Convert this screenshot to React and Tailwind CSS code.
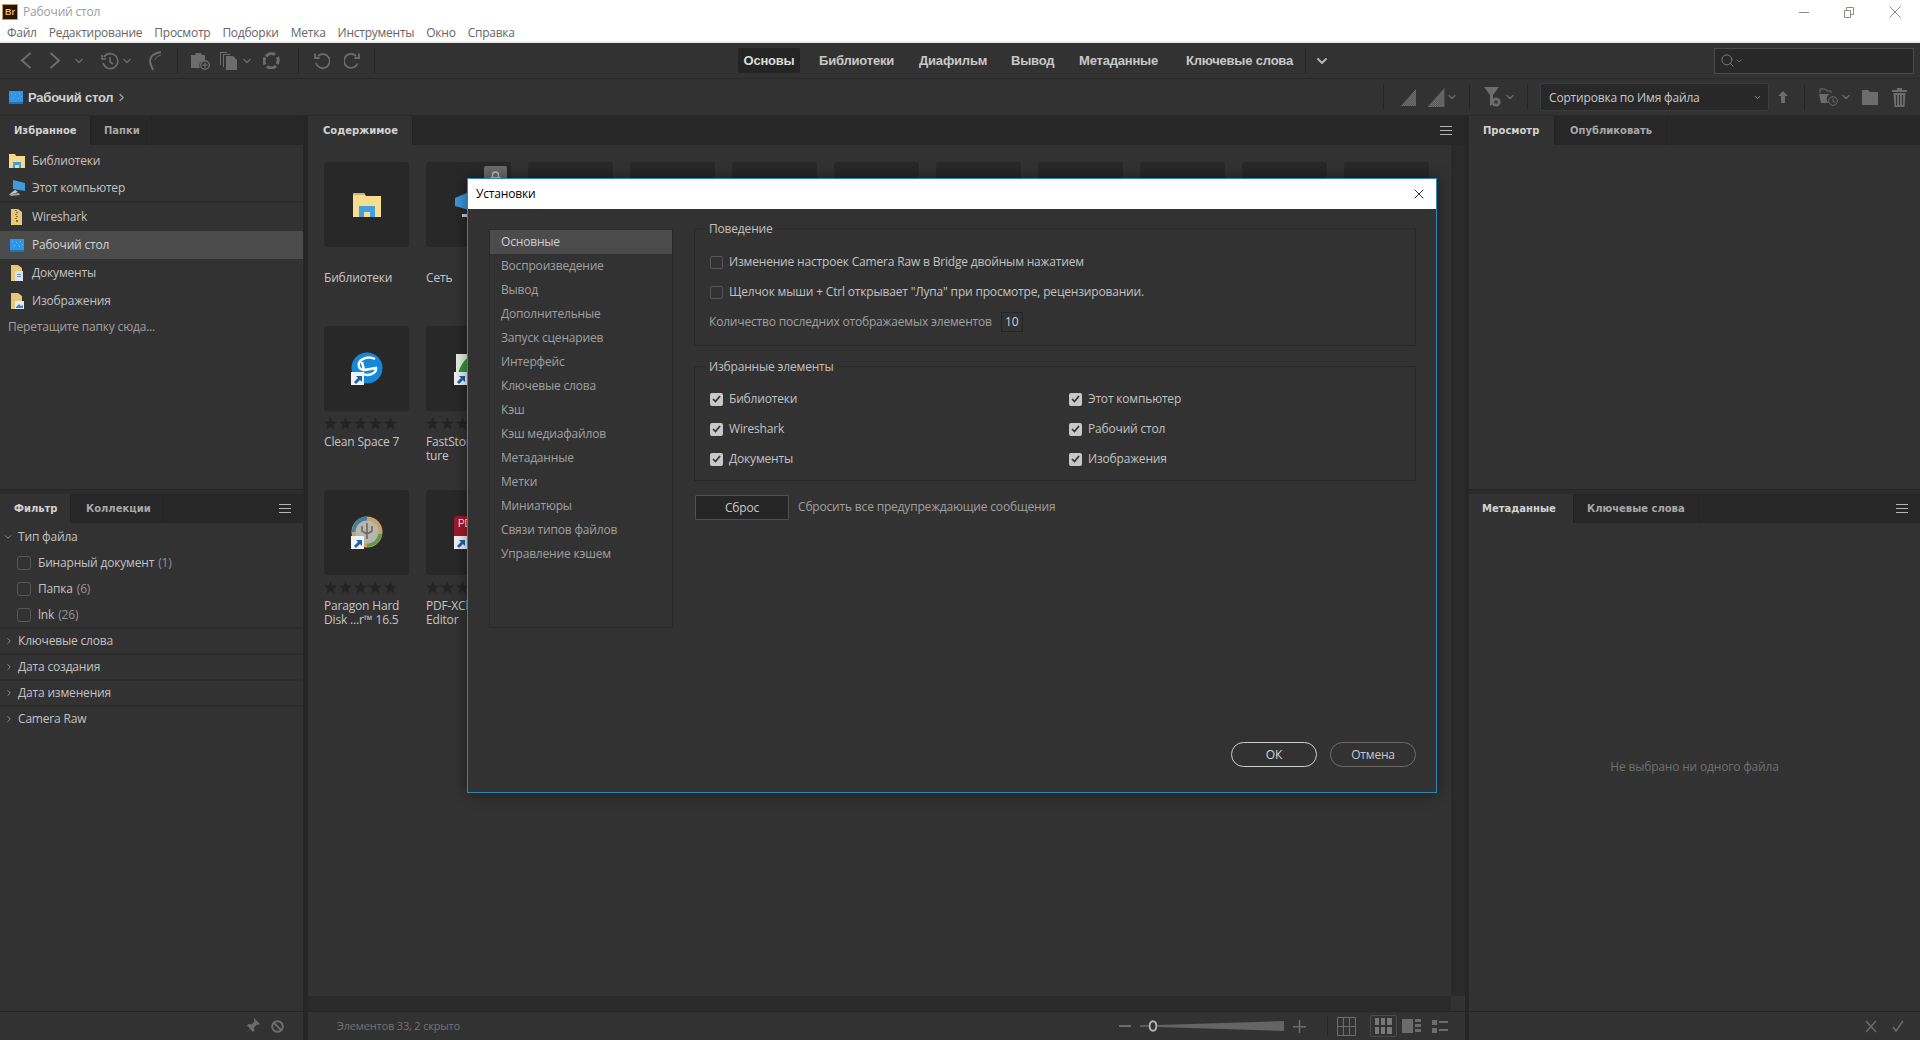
import { ChevronDown, ChevronRight, Search, X } from 'lucide-react';

const favorites = [
  { name: 'Библиотеки', icon: 'lib' },
  { name: 'Этот компьютер', icon: 'pc', line: true },
  { name: 'Wireshark', icon: 'zip' },
  { name: 'Рабочий стол', icon: 'desk', active: true },
  { name: 'Документы', icon: 'docs' },
  { name: 'Изображения', icon: 'pics' },
];

const prefTabs = [
  'Основные',
  'Воспроизведение',
  'Вывод',
  'Дополнительные',
  'Запуск сценариев',
  'Интерфейс',
  'Ключевые слова',
  'Кэш',
  'Кэш медиафайлов',
  'Метаданные',
  'Метки',
  'Миниатюры',
  'Связи типов файлов',
  'Управление кэшем',
];

// Small icons of the favorites list
function SideIcon({ type }) {
  if (type === 'lib')
    return (
      <svg width="16" height="16" viewBox="0 0 16 16">
        <path d="M0 1h6l1 2h9v12H0z" fill="#f6d98a" />
        <path d="M4 15V9h8v6h-2v-3H6v3z" fill="#3c9fe2" />
      </svg>
    );
  if (type === 'pc')
    return (
      <svg width="18" height="18" viewBox="0 0 18 18">
        <path d="M5 1l12 3v8l-12-2z" fill="#3f9be0" />
        <path d="M7 11l3 2-9 3 2-2z" fill="#c9ced2" />
        <path d="M1 15l10-1 1 2-9 1z" fill="#9aa3a8" />
      </svg>
    );
  if (type === 'desk')
    return (
      <svg width="14" height="13" viewBox="0 0 14 13">
        <rect width="14" height="13" fill="#2f97e4" />
        <rect y="11" width="14" height="2" fill="#1c74b8" />
        <path d="M2 2h1v1H2zM6 3h1v1H6zM10 2h1v1h-1zM4 6h1v1H4zM9 7h1v1H9zM12 5h1v1h-1z" fill="#68b9f0" />
      </svg>
    );
  return (
    <svg width="14" height="18" viewBox="0 0 14 18">
      <path d="M1 1h7l4 3v13H1z" fill="#e8c878" />
      {type === 'zip' && <path d="M5 2h2v1H5zM6 4h2v1H6zM5 6h2v1H5zM6 8h2v1H6zM5 10h2v1H5zM6 12h2v2H6z" fill="#8a6a2c" />}
      {type === 'docs' && <path d="M5 7h8v10H5z" fill="#d8e4f0" />}
      {type === 'docs' && <path d="M7 10h4v1H7zM7 12h4v1H7z" fill="#6f8ca8" />}
      {type === 'pics' && <path d="M5 9h9v8H5z" fill="#e6edf3" />}
      {type === 'pics' && <path d="M6 15l3-3 2 2 2-1v3H6z" fill="#3f88c5" />}
    </svg>
  );
}

function Hamburger() {
  return (
    <svg width="12" height="9" viewBox="0 0 12 9" fill="#b4b4b4">
      <rect width="12" height="1" />
      <rect y="4" width="12" height="1" />
      <rect y="8" width="12" height="1" />
    </svg>
  );
}

function Shortcut() {
  return (
    <g>
      <rect x="0" y="20" width="13" height="13" fill="#f2f2f2" />
      <path d="M3 30l4-4-2-2h6v6l-2-2-4 4z" fill="#1d5fb0" />
    </g>
  );
}

function Thumb({ children, lock }) {
  return (
    <div className="relative flex h-[85px] w-[85px] shrink-0 items-center justify-center rounded-[3px] bg-[#282828]">
      {lock && (
        <div className="absolute right-[4px] top-[4px] flex h-[23px] w-[23px] items-center justify-center rounded-[2px] bg-[#6b6b6b]">
          <svg width="11" height="13" viewBox="0 0 11 13">
            <path d="M2.5 6V4a3 3 0 016 0v2" fill="none" stroke="#c4c4c4" strokeWidth="1.4" />
            <rect y="6" width="11" height="7" rx="1" fill="#c4c4c4" />
          </svg>
        </div>
      )}
      {children}
    </div>
  );
}

function Stars() {
  return (
    <div className="flex h-[24px] items-center gap-[2px]">
      {[0, 1, 2, 3, 4].map((i) => (
        <svg key={i} width="13" height="13" viewBox="0 0 13 13" fill="#232323">
          <polygon points="6.5,0 8.1,4.6 13,4.8 9.1,7.8 10.5,12.6 6.5,9.8 2.5,12.6 3.9,7.8 0,4.8 4.9,4.6" />
        </svg>
      ))}
    </div>
  );
}

function GridItem({ icon, label, stars, lock }) {
  return (
    <div className="flex h-[164px] w-[85px] shrink-0 flex-col">
      <Thumb lock={lock}>{icon}</Thumb>
      {stars ? <Stars /> : <div className="h-[24px]" />}
      <div className="whitespace-nowrap text-[12px] leading-[14px] text-[#c6c6c6]">{label}</div>
    </div>
  );
}

function TabLabel({ children, active, className }) {
  return (
    <div
      className={`flex h-[29px] items-center whitespace-nowrap border-r border-[#232323] font-['DejaVu_Sans',sans-serif] text-[10px] font-bold tracking-normal ${
        active ? 'bg-[#323232] text-[#d2d2d2]' : 'text-[#a8a8a8]'
      } ${className}`}
    >
      {children}
    </div>
  );
}

function Check({ checked }) {
  if (!checked) return <div className="h-[13px] w-[13px] rounded-[2px] border border-[#585858]" />;
  return (
    <div className="flex h-[13px] w-[13px] items-center justify-center rounded-[2px] bg-[#c8c8c8]">
      <svg width="9" height="8" viewBox="0 0 9 8">
        <path d="M1 4l2.5 2.5L8 1" fill="none" stroke="#333" strokeWidth="1.7" />
      </svg>
    </div>
  );
}

function FilterCheck({ label, count }) {
  return (
    <div className="flex h-[26px] items-center pl-[17px]">
      <div className="h-[14px] w-[14px] rounded-[3px] border border-[#585858]" />
      <span className="ml-[7px] text-[#c2c2c2]">{label}</span>
      <span className="ml-[4px] text-[#949494]">{count}</span>
    </div>
  );
}

function FilterRow({ label }) {
  return (
    <div className="flex h-[26px] items-center border-b-2 border-[#2b2b2b] text-[#c2c2c2]">
      <ChevronRight size={10} className="ml-[4px] text-[#a0a0a0]" />
      <span className="ml-[4px]">{label}</span>
    </div>
  );
}

function Sep({ className }) {
  return <div className={`h-[26px] w-px bg-[#262626] ${className}`} />;
}

function Stairs({ w, h, id }) {
  return (
    <svg width={w} height={h} viewBox="0 0 16 18">
      <defs>
        <pattern id={id} width="2" height="2" patternUnits="userSpaceOnUse">
          <rect width="2" height="2" fill="#4a4a4a" />
          <rect width="1" height="1" fill="#7c7c7c" />
          <rect x="1" y="1" width="1" height="1" fill="#7c7c7c" />
        </pattern>
      </defs>
      <path d="M0 18L16 0v18z" fill={`url(#${id})`} />
    </svg>
  );
}

function TitleBar() {
  return (
    <div className="h-[43px] shrink-0 border-b-2 border-[#ececec] bg-white">
      <div className="flex h-[24px] items-center">
        <div className="ml-[3px] flex h-[14px] w-[14px] items-center justify-center bg-[#2a1503] ring-1 ring-[#c79a5a]">
          <span className="font-['Liberation_Sans',sans-serif] text-[9px] font-bold leading-none tracking-normal text-[#e8b56a]">Br</span>
        </div>
        <span className="ml-[6px] text-[12px] text-[#9c9c9c]">Рабочий стол</span>
        <svg className="ml-auto" width="10" height="1" viewBox="0 0 10 1">
          <rect width="10" height="1" fill="#8c8c80" />
        </svg>
        <svg className="ml-[35px]" width="10" height="11" viewBox="0 0 10 11" fill="none" stroke="#8c8c80">
          <path d="M.5 3.5h6v7h-6zM2.5 3V.5h7v7H7" />
        </svg>
        <svg className="ml-[35px] mr-[19px]" width="12" height="12" viewBox="0 0 12 12" stroke="#8c8c80">
          <path d="M.5.5l11 11M11.5.5l-11 11" />
        </svg>
      </div>
      <div className="flex h-[17px] items-center gap-[12px] pl-[7px] text-[12px] leading-none tracking-[-0.25px] text-[#666666]">
        <span>Файл</span>
        <span>Редактирование</span>
        <span>Просмотр</span>
        <span>Подборки</span>
        <span>Метка</span>
        <span>Инструменты</span>
        <span>Окно</span>
        <span>Справка</span>
      </div>
    </div>
  );
}

function WorkspaceBar() {
  return (
    <div className="flex h-[36px] shrink-0 items-center border-b border-[#282828] bg-[#323232]">
      <div className="flex h-full w-[738px] items-center text-[#6c6c6c]">
        <svg className="ml-[20px]" width="12" height="17" viewBox="0 0 12 17" fill="none" stroke="#6c6c6c" strokeWidth="2">
          <path d="M10.500 1L2 8.500l8.500 7.500" />
        </svg>
        <svg className="ml-[17px]" width="12" height="17" viewBox="0 0 12 17" fill="none" stroke="#6c6c6c" strokeWidth="2">
          <path d="M1.500 1L10 8.500 1.500 16" />
        </svg>
        <ChevronDown size={12} strokeWidth={2.5} className="ml-[12px]" />
        {/* history */}
        <svg className="ml-[16px]" width="18" height="18" viewBox="0 0 18 18" fill="none" stroke="#6c6c6c" strokeWidth="1.6">
          <path d="M3 5a7.5 7.5 0 11-1 6" />
          <path d="M1 3v4h4" />
          <path d="M9 5v5l3 2" />
        </svg>
        <ChevronDown size={12} strokeWidth={2.5} className="ml-[2px]" />
        {/* boomerang */}
        <svg className="ml-[15px]" width="14" height="20" viewBox="0 0 14 20" fill="none" stroke="#6c6c6c" strokeWidth="2">
          <path d="M13 1C7 2 2 5 2 10c0 3 2 6 3 9" />
          <path d="M13 4C10 5 7 7 7 9" strokeWidth="1" />
        </svg>
        <Sep className="ml-[15px]" />
        {/* camera */}
        <svg className="ml-[13px]" width="19" height="18" viewBox="0 0 19 18" fill="#6c6c6c">
          <path d="M0 3h4l1-2h5l1 2h3v6h-3a5 5 0 00-2 7H0z" />
          <circle cx="14" cy="13" r="4.3" fill="none" stroke="#6c6c6c" strokeWidth="1.4" />
          <path d="M13.4 10.5h1.2v2h2v1.2h-2v2h-1.2v-2h-2v-1.2h2z" />
        </svg>
        {/* copy */}
        <svg className="ml-[10px]" width="18" height="18" viewBox="0 0 18 18" fill="#6c6c6c">
          <path d="M0 0h7v1H1v12H0z" />
          <path d="M3 2h7v1H4v12H3z" />
          <path d="M6 4h7l4 4v10H6z" />
        </svg>
        <ChevronDown size={12} strokeWidth={2.5} className="ml-[3px]" />
        {/* refresh */}
        <svg className="ml-[10px]" width="17" height="17" viewBox="0 0 17 17" fill="none" stroke="#6c6c6c" strokeWidth="3">
          <path d="M3 4.5A7 7 0 0112 2.5" />
          <path d="M14.5 5A7 7 0 0114 12" />
          <path d="M13 14a7 7 0 01-9 .5" />
          <path d="M2 12.5a7 7 0 010-7" />
        </svg>
        <Sep className="ml-[18px]" />
        {/* undo, redo */}
        <svg className="ml-[15px]" width="16" height="17" viewBox="0 0 16 17" fill="none" stroke="#6c6c6c" strokeWidth="1.8">
          <path d="M4 4a7 7 0 11-2 7" />
          <path d="M1 1.5V6h4.5" />
        </svg>
        <svg className="ml-[14px]" width="16" height="17" viewBox="0 0 16 17" fill="none" stroke="#6c6c6c" strokeWidth="1.8">
          <path d="M12 4a7 7 0 101.5 7.5" />
          <path d="M15 1.5V6h-4.5" />
        </svg>
        <Sep className="ml-[14px]" />
      </div>
      <div className="flex items-center font-['Liberation_Sans',sans-serif] text-[13px] font-bold tracking-[-0.2px] text-[#c8c8c8]">
        <div className="flex h-[25px] w-[62px] items-center justify-center rounded-[2px] bg-[#242424] text-[#dcdcdc]">Основы</div>
        <span className="ml-[19px] w-[74px] whitespace-nowrap">Библиотеки</span>
        <span className="ml-[26px] w-[66px] whitespace-nowrap">Диафильм</span>
        <span className="ml-[26px] w-[42px] whitespace-nowrap">Вывод</span>
        <span className="ml-[26px] w-[81px] whitespace-nowrap">Метаданные</span>
        <span className="ml-[26px] w-[105px] whitespace-nowrap">Ключевые слова</span>
        <Sep className="ml-[14px]" />
        <ChevronDown size={16} strokeWidth={3} className="ml-[8px] text-[#b4b4b4]" />
      </div>
      <div className="ml-auto mr-[6px] flex h-[26px] w-[200px] items-center border border-[#4a4a4a] bg-[#282828] pl-[5px] text-[#8a8a8a]">
        <Search size={15} strokeWidth={1.3} />
        <ChevronDown size={8} strokeWidth={2} />
      </div>
    </div>
  );
}

function PathBar() {
  return (
    <div className="flex h-[37px] shrink-0 items-center border-b border-[#282828] bg-[#323232]">
      <div className="ml-[9px]">
        <SideIcon type="desk" />
      </div>
      <span className="ml-[5px] mt-[1px] font-['Liberation_Sans',sans-serif] text-[13px] font-bold tracking-[-0.2px] text-[#cfcfcf]">Рабочий стол</span>
      <ChevronRight size={13} strokeWidth={2} className="ml-[2px] text-[#a8a8a8]" />

      <div className="ml-auto flex items-center pr-[13px] text-[#6c6c6c]">
        <Sep />
        <div className="ml-[17px]">
          <Stairs w={15} h={17} id="stairsA" />
        </div>
        <div className="ml-[11px]">
          <Stairs w={18} h={19} id="stairsB" />
        </div>
        <ChevronDown size={12} strokeWidth={2.5} className="ml-[1px]" />
        <Sep className="ml-[11px]" />
        <svg className="ml-[14px]" width="17" height="20" viewBox="0 0 17 20" fill="#6c6c6c">
          <path d="M0 0h15l-6 8v9l-3 2V8z" />
          <circle cx="12" cy="15" r="4.6" />
          <path d="M12 12.5l.8 1.7 1.7.2-1.3 1.1.4 1.7-1.6-.9-1.6.9.4-1.7-1.3-1.1 1.7-.2z" fill="#323232" />
        </svg>
        <ChevronDown size={12} strokeWidth={2.5} className="ml-[3px]" />
        <Sep className="ml-[11px]" />
        <div className="ml-[13px] flex h-[26px] w-[227px] items-center rounded-[2px] bg-[#282828] pl-[8px] pr-[6px] pt-[1px] text-[12px] text-[#c8c8c8] ring-1 ring-[#3c3c3c]">
          <span>Сортировка по Имя файла</span>
          <ChevronDown size={9} strokeWidth={2} className="ml-auto text-[#b0b0b0]" />
        </div>
        <svg className="ml-[10px]" width="10" height="12" viewBox="0 0 10 12" fill="#6c6c6c">
          <path d="M5 0l5 5H7v7H3V5H0z" />
        </svg>
        <Sep className="ml-[16px]" />
        <svg className="ml-[14px]" width="19" height="18" viewBox="0 0 19 18" fill="#6c6c6c">
          <path d="M0 6h11a5 5 0 00-1 9H2z" />
          <path d="M1 5V1h5l2 2h4v2" fill="none" stroke="#6c6c6c" />
          <circle cx="14" cy="13" r="4.3" fill="none" stroke="#6c6c6c" />
          <path d="M13.5 10.5h1V13l1.5 1-.5.7-2-1.3z" />
        </svg>
        <ChevronDown size={12} strokeWidth={2.5} className="ml-[2px]" />
        <svg className="ml-[10px]" width="16" height="15" viewBox="0 0 16 15" fill="#6c6c6c">
          <path d="M0 0h6l2 2h8v13H0z" />
        </svg>
        <svg className="ml-[14px]" width="15" height="19" viewBox="0 0 15 19" fill="#6c6c6c">
          <path d="M0 2h5V0h5v2h5v2H0z" />
          <path d="M1.5 5h12L12.500 19h-10zM4 7v10h1V7zM7 7v10h1V7zM10 7v10h1V7z" fillRule="evenodd" />
        </svg>
      </div>
    </div>
  );
}

function LeftColumn() {
  return (
    <div className="flex h-full w-[303px] shrink-0 flex-col">
      <div className="flex h-[29px] shrink-0 bg-[#272727]">
        <TabLabel active className="w-[91px] pl-[14px]">Избранное</TabLabel>
        <TabLabel className="w-[61px] pl-[13px]">Папки</TabLabel>
      </div>
      <div className="flex h-[344px] shrink-0 flex-col bg-[#323232] pt-[2px] text-[12px] text-[#c2c2c2]">
        {favorites.map((f) => (
          <div
            key={f.name}
            className={`flex h-[28px] shrink-0 items-center ${f.active ? 'bg-[#4b4b4b] text-[#d4d4d4]' : ''} ${f.line ? 'border-b-2 border-[#2b2b2b]' : ''}`}
          >
            <div className="flex w-[32px] justify-center pl-[2px]">
              <SideIcon type={f.icon} />
            </div>
            <span>{f.name}</span>
          </div>
        ))}
        <div className="mt-[3px] pl-[8px] text-[#a0a0a0]">Перетащите папку сюда...</div>
      </div>
      <div className="h-[5px] shrink-0 border-t border-[#262626] bg-[#2c2c2c]" />
      <div className="flex h-[29px] shrink-0 bg-[#272727]">
        <TabLabel active className="w-[71px] pl-[14px]">Фильтр</TabLabel>
        <TabLabel className="w-[92px] pl-[15px]">Коллекции</TabLabel>
        <div className="ml-auto mr-[12px] self-center">
          <Hamburger />
        </div>
      </div>
      <div className="flex-1 bg-[#323232] pt-[1px] text-[12px]">
        <div className="flex h-[26px] items-center text-[#c2c2c2]">
          <ChevronDown size={10} className="ml-[3px] text-[#a0a0a0]" />
          <span className="ml-[5px]">Тип файла</span>
        </div>
        <FilterCheck label="Бинарный документ" count="(1)" />
        <FilterCheck label="Папка" count="(6)" />
        <FilterCheck label="lnk" count="(26)" />
        <div className="-mt-[1px] border-t-2 border-[#2b2b2b]" />
        <FilterRow label="Ключевые слова" />
        <FilterRow label="Дата создания" />
        <FilterRow label="Дата изменения" />
        <div className="flex h-[26px] items-center pb-[2px] text-[#c2c2c2]">
          <ChevronRight size={10} className="ml-[4px] text-[#a0a0a0]" />
          <span className="ml-[4px]">Camera Raw</span>
        </div>
      </div>
      <div className="flex h-[29px] shrink-0 items-center justify-end border-t border-[#262626] bg-[#323232] pr-[19px]">
        <svg width="16" height="16" viewBox="0 0 16 16" fill="#6c6c6c">
          <path d="M10 0l6 6-2 1-1-.5-3 3 .5 3-1.500 1.500-3-3-5 5 5-5.500-3-3L4.500 6l3 .5 3-3L10 2z" />
        </svg>
        <svg className="ml-[11px]" width="13" height="13" viewBox="0 0 13 13" fill="none" stroke="#6c6c6c" strokeWidth="2">
          <circle cx="6.500" cy="6.500" r="5.300" />
          <path d="M3 3l7 7" />
        </svg>
      </div>
    </div>
  );
}

function ContentColumn() {
  const rest = [2, 3, 4, 5, 6, 7, 8, 9, 10];
  return (
    <div className="flex h-full w-[1157px] shrink-0 flex-col bg-[#323232]">
      <div className="flex h-[29px] shrink-0 items-center bg-[#272727]">
        <TabLabel active className="w-[105px] pl-[15px]">Содержимое</TabLabel>
        <div className="ml-auto mr-[13px]">
          <Hamburger />
        </div>
      </div>
      <div className="flex min-h-0 flex-1">
        <div className="flex-1 overflow-hidden pl-[16px] pt-[17px]">
          <div className="flex gap-[17px]">
            <GridItem
              label="Библиотеки"
              icon={
                <svg width="28" height="24" viewBox="0 0 28 24">
                  <path d="M0 0h11l2 3h15v21H0z" fill="#f8dd8e" />
                  <path d="M0 0h11l1 2H0z" fill="#c9b77a" />
                  <path d="M6 24V13h16v11h-5v-5h-6v5z" fill="#3fa0e4" />
                </svg>
              }
            />
            <GridItem
              lock
              label="Сеть"
              icon={
                <svg width="30" height="30" viewBox="0 0 30 30">
                  <path d="M1 8l14-6v18L1 16z" fill="#3c97dc" />
                  <path d="M15 2l13 6v8l-13 4z" fill="#62b2ea" />
                  <path d="M8 24h14v3H8z" fill="#c6ccd0" />
                </svg>
              }
            />
            {rest.map((n) => (
              <Thumb key={n} />
            ))}
          </div>
          <div className="flex gap-[17px]">
            <GridItem
              stars
              label="Clean Space 7"
              icon={
                <svg width="32" height="33" viewBox="0 0 32 33">
                  <circle cx="16" cy="16" r="15.500" fill="#1588d8" />
                  <path d="M24 7C16 3 6 8 8 15c1 2 3 3 5 2M11 10l2 8 12-2c1 6-9 9-15 5" fill="none" stroke="#fff" strokeWidth="2.500" />
                  <Shortcut />
                </svg>
              }
            />
            <GridItem
              stars
              label={
                <>
                  FastStone Cap
                  <br />
                  ture
                </>
              }
              icon={
                <svg width="30" height="33" viewBox="0 0 30 33">
                  <rect x="2" y="2" width="26" height="26" fill="#e8efe6" />
                  <path d="M3 26c2-12 8-20 16-24 2 8 6 16 8 24z" fill="#2f9a3a" />
                  <Shortcut />
                </svg>
              }
            />
          </div>
          <div className="flex gap-[17px]">
            <GridItem
              stars
              label={
                <>
                  Paragon Hard
                  <br />
                  Disk ...r™ 16.5
                </>
              }
              icon={
                <svg width="32" height="33" viewBox="0 0 32 33">
                  <circle cx="16" cy="16" r="15.500" fill="#c4a36a" />
                  <path d="M16 .5A15.500 15.500 0 001 16h4A11 11 0 0116 5z" fill="#3c7fa6" />
                  <path d="M31 18a15.500 15.500 0 01-15 13v-4a11 11 0 0011-9z" fill="#5f9a4a" />
                  <circle cx="16" cy="16" r="11.500" fill="#b9b6ae" />
                  <path d="M16 7v16M11 10v5l5 3 5-3v-5" fill="none" stroke="#6e6a64" strokeWidth="1.600" />
                  <Shortcut />
                </svg>
              }
            />
            <GridItem
              stars
              label={
                <>
                  PDF-XChange
                  <br />
                  Editor
                </>
              }
              icon={
                <svg width="30" height="33" viewBox="0 0 30 33">
                  <rect width="30" height="28" rx="4" fill="#a01a2a" />
                  <text x="4" y="11" fontSize="10" fill="#f0f0f0" fontFamily="Liberation Sans">PDF</text>
                  <Shortcut />
                </svg>
              }
            />
          </div>
        </div>
        <div className="w-[14px] shrink-0 bg-[#2a2a2a]" />
      </div>
      <div className="flex h-[15px] shrink-0">
        <div className="flex-1 bg-[#2a2a2a]" />
        <div className="w-[14px] bg-[#323232]" />
      </div>
      <div className="flex h-[29px] shrink-0 items-center border-t border-[#262626] pl-[29px] pr-[17px] text-[11px] text-[#737373]">
        <span>Элементов 33, 2 скрыто</span>
        <svg className="ml-auto" width="12" height="3" viewBox="0 0 12 3">
          <rect width="12" height="2" fill="#6c6c6c" />
        </svg>
        <svg className="ml-[9px]" width="144" height="12" viewBox="0 0 144 12">
          <rect x="0" y="5" width="8" height="2" fill="#5c5c5c" />
          <polygon points="18,5 144,1 144,11 18,7" fill="#646464" />
          <ellipse cx="13" cy="6" rx="3.400" ry="4.800" fill="#323232" stroke="#b4b4b4" strokeWidth="2" />
        </svg>
        <svg className="ml-[9px]" width="13" height="13" viewBox="0 0 13 13" fill="#6c6c6c">
          <rect x="0" y="6" width="13" height="1.500" />
          <rect x="5.800" y="0" width="1.500" height="13" />
        </svg>
        <div className="ml-[21px] h-[20px] w-px bg-[#262626]" />
        <svg className="ml-[9px]" width="19" height="19" viewBox="0 0 19 19" fill="none" stroke="#6c6c6c">
          <path d="M.5.5h18v18H.5zM6.500.5v18M12.500.5v18M.5 9.500h18" />
        </svg>
        <div className="ml-[14px] flex h-[22px] w-[27px] items-center justify-center rounded-[2px] border border-[#4c4c4c]">
          <svg width="17" height="16" viewBox="0 0 17 16" fill="#787878">
            <path d="M0 0h4v7H0zM6 0h4v7H6zM12 0h5v7h-5zM0 9h4v7H0zM6 9h4v7H6zM12 9h5v7h-5z" />
          </svg>
        </div>
        <svg className="ml-[5px]" width="19" height="14" viewBox="0 0 19 14" fill="#6c6c6c">
          <path d="M0 0h11v14H0zM13 0h6v3h-6zM13 5h6v3h-6zM13 10h6v3h-6z" />
        </svg>
        <svg className="ml-[11px]" width="16" height="13" viewBox="0 0 16 13" fill="#6c6c6c">
          <path d="M0 0h5v5H0zM0 8h5v5H0zM7 1h9v2H7zM7 9h9v2H7z" />
        </svg>
      </div>
    </div>
  );
}

function RightColumn() {
  return (
    <div className="flex h-full flex-1 flex-col bg-[#323232]">
      <div className="flex h-[29px] shrink-0 bg-[#272727]">
        <TabLabel active className="w-[86px] pl-[14px]">Просмотр</TabLabel>
        <TabLabel className="w-[113px] pl-[15px]">Опубликовать</TabLabel>
      </div>
      <div className="h-[344px] shrink-0" />
      <div className="h-[5px] shrink-0 border-t border-[#262626] bg-[#2c2c2c]" />
      <div className="flex h-[29px] shrink-0 bg-[#272727]">
        <TabLabel active className="w-[105px] pl-[13px]">Метаданные</TabLabel>
        <TabLabel className="w-[126px] pl-[13px]">Ключевые слова</TabLabel>
        <div className="ml-auto mr-[12px] self-center">
          <Hamburger />
        </div>
      </div>
      <div className="flex flex-1 items-center justify-center text-[12px] text-[#6f6f6f]">Не выбрано ни одного файла</div>
      <div className="flex h-[29px] shrink-0 items-center justify-end border-t border-[#262626] pr-[16px]">
        <svg width="12" height="13" viewBox="0 0 12 13" fill="none" stroke="#6c6c6c" strokeWidth="1.500">
          <path d="M1 1l10 11M11 1L1 12" />
        </svg>
        <svg className="ml-[15px]" width="12" height="12" viewBox="0 0 12 12" fill="none" stroke="#6c6c6c" strokeWidth="1.600">
          <path d="M1 7l3 4 7-10" />
        </svg>
      </div>
    </div>
  );
}

function PrefsDialog() {
  return (
    <div className="absolute left-[467px] top-[178px] flex h-[615px] w-[970px] flex-col border border-[#2f86b6] bg-[#323232] text-[12px] shadow-[0_0_14px_rgba(0,0,0,0.45)]">
      <div className="flex h-[30px] shrink-0 items-center bg-white pl-[8px] pr-[9px] text-black">
        <span>Установки</span>
        <X size={16} strokeWidth={1.2} className="ml-auto" />
      </div>
      <div className="flex flex-1 pl-[21px] pr-[20px] pt-[19px]">
        <div className="mt-[1px] h-[399px] w-[184px] shrink-0 border border-[#2a2a2a]">
          {prefTabs.map((t, i) => (
            <div
              key={t}
              className={`flex h-[24px] items-center pl-[11px] ${i === 0 ? 'bg-[#4b4b4b] text-[#d0d0d0]' : 'text-[#a0a0a0]'}`}
            >
              {t}
            </div>
          ))}
        </div>
        <div className="ml-[21px] flex flex-1 flex-col pb-[25px]">
          <div className="relative h-[118px] border border-[#282828] pl-[15px] pt-[18px]">
            <span className="absolute -top-[9px] left-[11px] bg-[#323232] px-[3px] text-[#c0c0c0]">Поведение</span>
            <div className="flex h-[30px] items-center text-[#c2c2c2]">
              <Check />
              <span className="ml-[6px]">Изменение настроек Camera Raw в Bridge двойным нажатием</span>
            </div>
            <div className="flex h-[30px] items-center text-[#c2c2c2]">
              <Check />
              <span className="ml-[6px]">Щелчок мыши + Ctrl открывает "Лупа" при просмотре, рецензировании.</span>
            </div>
            <div className="-ml-px flex h-[30px] items-center text-[#a0a0a0]">
              <span>Количество последних отображаемых элементов</span>
              <span className="ml-[9px] flex h-[20px] w-[22px] items-center justify-center border border-[#242424] text-[#d0d0d0]">10</span>
            </div>
          </div>
          <div className="relative mt-[20px] h-[115px] border border-[#282828] pl-[15px] pt-[17px]">
            <span className="absolute -top-[9px] left-[11px] bg-[#323232] px-[3px] text-[#c0c0c0]">Избранные элементы</span>
            <div className="grid grid-cols-[359px_1fr] text-[#c2c2c2]">
              {[
                ['Библиотеки', 'Этот компьютер'],
                ['Wireshark', 'Рабочий стол'],
                ['Документы', 'Изображения'],
              ].flat().map((t) => (
                <div key={t} className="flex h-[30px] items-center">
                  <Check checked />
                  <span className="ml-[6px]">{t}</span>
                </div>
              ))}
            </div>
          </div>
          <div className="mt-[14px] flex items-center">
            <div className="ml-px flex h-[25px] w-[94px] items-center justify-center rounded-[1px] border border-[#505050] bg-[#262626] text-[#c8c8c8]">Сброс</div>
            <span className="ml-[9px] pb-[2px] text-[#a0a0a0]">Сбросить все предупреждающие сообщения</span>
          </div>
          <div className="mt-auto flex justify-end gap-[13px]">
            <div className="flex h-[25px] w-[86px] items-center justify-center rounded-full border-[1.5px] border-[#cfcfcf] text-[#d4d4d4]">ОК</div>
            <div className="flex h-[25px] w-[86px] items-center justify-center rounded-full border-[1.5px] border-[#6e6a6a] text-[#c8c8c8]">Отмена</div>
          </div>
        </div>
      </div>
    </div>
  );
}

export default function App() {
  return (
    <div className="relative flex h-[1040px] w-[1920px] flex-col overflow-hidden bg-[#323232] font-['Open_Sans',sans-serif] tracking-[-0.18px]">
      <TitleBar />
      <WorkspaceBar />
      <PathBar />
      <div className="flex min-h-0 flex-1 bg-[#2a2a2a]">
        <LeftColumn />
        <div className="w-[5px] shrink-0 bg-[#262626]" />
        <ContentColumn />
        <div className="w-[4px] shrink-0 bg-[#262626]" />
        <RightColumn />
      </div>
      <PrefsDialog />
    </div>
  );
}
